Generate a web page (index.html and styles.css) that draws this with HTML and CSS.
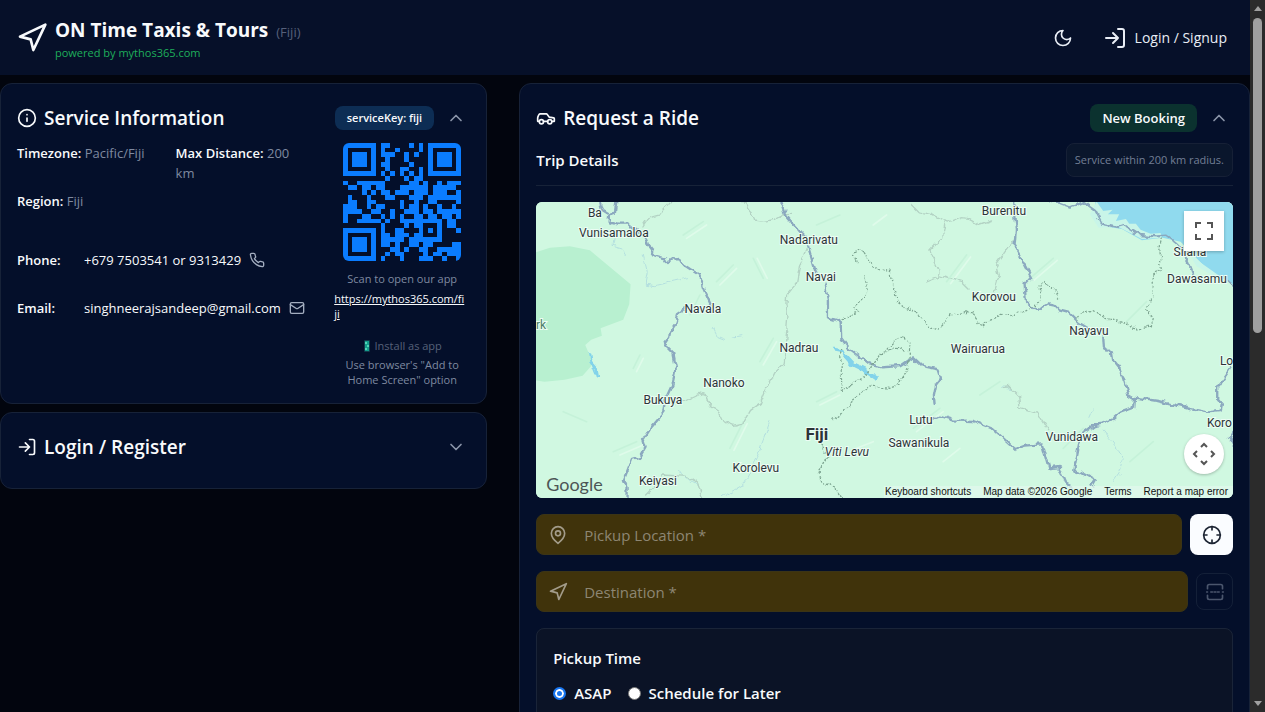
FILE: index.html
```html
<!DOCTYPE html>
<html lang="en">
<head>
<meta charset="utf-8">
<meta name="viewport" content="width=device-width, initial-scale=1">
<title>ON Time Taxis &amp; Tours</title>
<link rel="stylesheet" href="styles.css">
</head>
<body>
<div class="page">
  <header class="header">
    <a class="brand" href="#">
      <svg class="icon icon-32" viewBox="0 0 24 24"><path d="M3 11 22 2l-9 19-2-8z"/></svg>
      <span class="brand-text">
        <span class="brand-line"><span class="brand-name">ON Time Taxis &amp; Tours</span> <span class="brand-region">(Fiji)</span></span>
        <span class="brand-powered">powered by mythos365.com</span>
      </span>
    </a>
    <nav class="header-actions">
      <button class="plain" type="button" aria-label="Toggle theme"><svg class="icon icon-20" viewBox="0 0 24 24"><path d="M12 3a6 6 0 0 0 9 9 9 9 0 1 1-9-9Z"/></svg></button>
      <a class="login-link" href="#"><svg class="icon icon-24" viewBox="0 0 24 24"><path d="M15 3h4a2 2 0 0 1 2 2v14a2 2 0 0 1-2 2h-4M10 17l5-5-5-5M15 12H3"/></svg>Login / Signup</a>
    </nav>
  </header>

  <main class="columns">
    <div class="left">
      <section class="card">
        <div class="card-head">
          <h2 class="card-title"><svg class="icon icon-20" viewBox="0 0 24 24"><circle cx="12" cy="12" r="10"/><path d="M12 16v-4M12 8h.01"/></svg>Service Information</h2>
          <span class="badge badge-key">serviceKey: fiji</span>
          <button class="plain chevron" type="button" aria-label="Collapse"><svg class="icon icon-20" viewBox="0 0 24 24"><path d="m18 15-6-6-6 6"/></svg></button>
        </div>
        <div class="service">
          <div class="details">
            <div class="facts">
              <p><b>Timezone:</b> Pacific/Fiji</p>
              <p><b>Max Distance:</b> 200 km</p>
              <p><b>Region:</b> Fiji</p>
            </div>
            <dl class="contacts">
              <dt>Phone:</dt>
              <dd><a href="#">+679 7503541 or 9313429</a><svg class="icon icon-16 dim" viewBox="0 0 24 24"><path d="M22 16.92v3a2 2 0 0 1-2.18 2 19.79 19.79 0 0 1-8.63-3.07 19.5 19.5 0 0 1-6-6 19.79 19.79 0 0 1-3.07-8.67A2 2 0 0 1 4.11 2h3a2 2 0 0 1 2 1.72 12.84 12.84 0 0 0 .7 2.81 2 2 0 0 1-.45 2.11L8.09 9.91a16 16 0 0 0 6 6l1.27-1.27a2 2 0 0 1 2.11-.45 12.84 12.84 0 0 0 2.81.7A2 2 0 0 1 22 16.92z"/></svg></dd>
              <dt>Email:</dt>
              <dd><a href="#">singhneerajsandeep@gmail.com</a><svg class="icon icon-16 dim" viewBox="0 0 24 24"><rect x="2" y="4" width="20" height="16" rx="2"/><path d="m22 7-8.97 5.7a1.94 1.94 0 0 1-2.06 0L2 7"/></svg></dd>
            </dl>
          </div>
          <div class="share">
            <svg class="qr" id="qr" viewBox="0 0 25 25" role="img" aria-label="QR code"></svg>
            <p class="scan">Scan to open our app</p>
            <a class="share-link" href="#">https://mythos365.com/fiji</a>
            <p class="install"><svg class="phone-emoji" viewBox="0 0 8 12"><rect x="1" width="6" height="12" rx="1" fill="#123c4c"/><path d="M2 1h4v10H2z" fill="#159c8c"/><path d="M2 2h2v2H2zM4 5h2v2H4zM2 8h2v2H2z" fill="#4fd5b5"/></svg>Install as app</p>
            <p class="install-hint">Use browser's "Add to Home Screen" option</p>
          </div>
        </div>
      </section>

      <section class="card card-login">
        <div class="card-head">
          <h2 class="card-title"><svg class="icon icon-20" viewBox="0 0 24 24"><path d="M15 3h4a2 2 0 0 1 2 2v14a2 2 0 0 1-2 2h-4M10 17l5-5-5-5M15 12H3"/></svg>Login / Register</h2>
          <button class="plain chevron" type="button" aria-label="Expand"><svg class="icon icon-20" viewBox="0 0 24 24"><path d="m6 9 6 6 6-6"/></svg></button>
        </div>
      </section>
    </div>

    <section class="card ride">
      <div class="card-head">
        <h2 class="card-title"><svg class="icon icon-20" viewBox="0 0 24 24"><path d="M14 16H9m10 0h3v-3.150a1 1 0 0 0-.84-.99L16 11l-2.700-3.600a1 1 0 0 0-.8-.4H5.240a2 2 0 0 0-1.800 1.100l-.8 1.630A6 6 0 0 0 2 12.420V16h2"/><circle cx="6.500" cy="16.500" r="2.500"/><circle cx="16.500" cy="16.500" r="2.500"/></svg>Request a Ride</h2>
        <span class="badge badge-new">New Booking</span>
        <button class="plain chevron" type="button" aria-label="Collapse"><svg class="icon icon-20" viewBox="0 0 24 24"><path d="m18 15-6-6-6 6"/></svg></button>
      </div>
      <div class="trip-head">
        <h3>Trip Details</h3>
        <span class="radius-note">Service within 200 km radius.</span>
      </div>

      <div class="map">
        <svg class="map-canvas" viewBox="0 0 697 296" preserveAspectRatio="xMidYMid slice">
          <defs>
            <filter id="wiggle" x="0" y="0" width="100%" height="100%">
              <feTurbulence type="fractalNoise" baseFrequency=".12" numOctaves="2" seed="4" result="noise"/>
              <feDisplacementMap in="SourceGraphic" in2="noise" scale="7" xChannelSelector="R" yChannelSelector="G"/>
            </filter>
          </defs>
          <rect width="697" height="296" fill="#d0f8e1"/>
          <g transform="translate(-6 -7) scale(.33333)" fill="none" stroke-linejoin="round" stroke-linecap="round">
            <path fill="#b8f0d0" d="M0 178 60 158l60-4 60 12 50 42 72 60-4 60-18 46-68 26 4 22-32 12-18 16 24 56-32 36-54 12-60 6-40-6z"/>
            <path stroke="#c5f2d9" stroke-width="5" d="M460 120l60-40M560 260l50-50M330 480l-20 40M690 500l40-70M250 770l70-30M600 760l40-80M700 250l-30-60M860 620l60-30M1250 260l60-80M1500 250l70-60M1850 320l-60 60M1150 700l80-60M1800 800l70-60M1350 600l60-40M480 360l30-60M860 90l70-30M100 650l70 30M1600 760l60-60"/>
            <path stroke="#dffbea" stroke-width="5" d="M470 130l60-40M570 270l50-50M340 490l-20 40M700 510l40-70M270 780l70-30M612 766l40-80M712 250l-30-60M870 630l60-30M1262 266l60-80M1512 256l70-60M1160 710l80-60M1240 800l50-40M1030 90l40-30M980 760l50-20"/>
            <path fill="#90daee" d="M1700 0h430v290l-30-30-50-20-60-60-38-40-54-12-62 8-60-34-56-8-20-22 10-12-18-10z"/>
            <path fill="#c8f5e8" d="M1700 20l20 28 28-4-14 14 34 0-10 20 30-6 10 14 20 0 14 18 30 12 30-2 4 14-60 4-70-36-60 2-26-40zM1980 180l110 78-20-4-70-40z"/>
          </g>
          <g filter="url(#wiggle)">
          <rect width="697" height="296" fill="none"/>
          <g transform="translate(-6 -7) scale(.33333)" fill="none" stroke-linejoin="round" stroke-linecap="round">
            <g stroke="#82d3ea" stroke-width="3"><path stroke-width="7" d="M178 478l4 24 18 20 4 22M186 510l10 26M910 462l30 6 12 20"/><path stroke-width="14" d="M950 486l20 22 36 18 34 24"/><path stroke="#b4e0df" d="M250 130l-4 24 28 8 12 20M340 180l12 50-6 38 30 4 60-14 40-10M550 400l14 28 20 8M610 426l26-4M720 680l-40 110-42 80-60 36M440 830l60 40M1720 705l40 50 20 40-12 40-20 30M1690 645l-10 22M1415 575l30 6"/></g>
            <g stroke="#b3d3c4" stroke-width="4"><path d="M425 22l-30 34-36 10-20 30M640 22l30 40 4 16 28 4 28-6 28-16 24-2M830 165l-20 40-10 60-30 36-2 30 6 30-10 120M766 480l-4 26-30 30-20 40-20 50-30 20-24 42-26 6-30-12-16-34-24-16-10-30-20-8-50 24-40 6M1145 30l20 20 40 8 40 20 16 4 34-14 20 2 36 20 34-12M1246 80l-8 46-38 42 28 60-2 16-36 14M1230 243l68 20 20 20M1450 140l-50 70 8 30-14 50M350 900l30-30 20-30 70 4 30 20 15 45M1420 578l20-4 26 26 4 40 50 14 20 30 14 24"/></g>
            <g stroke="#8ba9bf" stroke-width="7"><path d="M210 22l6 22 22 14-2 20 30 8 30 0 50 40 12 34 18 22 30 8 8 14 8-10 30-2 10 18 46 30 12 40 24 52M262 22l-4 30-20 8M470 340l-26 18-8 30-16 22-2 20-14 20 26 26 8 40-10 50-20 44-4 40-42 50-24 38 6 20-16 28-22 6-24 62 8 20 0 52M755 0l0 22 14 40 34 40 24 26 32 110M884 265l10 50 0 52 38 12 2 50 20 28 26 20 36 30 40 10 56-4 38-26 28 26 48 10 8 26-16 20-6 30 2 28M1210 672l20-10 40 14 60 2 60 24 66 60 30-10 50-4 20 72 32-4 20 50 16 8M1450 0l0 22 4 50 4 30-4 50 50 96-20 20 4 50 22 20 20 4 26-14 18 4 14 14 30 8 30 30 24 14M1720 424l2 34 24 14 4 26 24 30 20 68 20 12 70 10 96 24 56 10 36-4 4-20-14-16 0-34 40-58M1815 614l-2 24-40 14-26 22-30 12-24 4-40 30-20 104 26 10 36 20-10 18M1560 16l60 22 40-16 36 26 20 38 46 10 20-6 46 30 50 4 30-2 30 24 20 20 20 40 12 30M2100 258l20 18M2110 710l-10 20 14 26"/></g>
            <g stroke="#7da591" stroke-width="4" stroke-dasharray="3 8"><path d="M978 200l-4-26 16-12 12 12 26 44 52 8 4 28 20 70 60 34 36 40 26 6 40-48 60-4 28 42 60-36 30 4 54-18 36-30-4-48 12-10 44 50M1008 240l0 60-36 36 14 18-44 14-6 28M1894 130l-4 34 4 60-24 20 0 60-20 40 20 26-6 26-40 6-40-18-56-14-40-24-36 6-16 26M932 460l4 130 78-56 26-40 60-60 20-10 20 20-4 70-30 54-30 12-62-8-110 110M876 750l20 30-30 50 10 30 40 20 24 34M1050 485l40-26 36 6"/></g>
          </g>
          </g>
          <rect x="348" y="284" width="349" height="12" fill="#e2f8ec" opacity=".75"/>
          <g class="places">
            <text x="59" y="15">Ba</text><text x="78" y="35">Vunisamaloa</text><text x="273" y="42">Nadarivatu</text><text x="285" y="79">Navai</text><text x="468" y="13">Burenitu</text><text x="654" y="54">Silana</text><text x="661" y="81">Dawasamu</text><text x="458" y="99">Korovou</text><text x="167" y="111">Navala</text><text x="553" y="133">Nayavu</text><text x="263" y="150">Nadrau</text><text x="442" y="151">Wairuarua</text><text x="188" y="185">Nanoko</text><text x="127" y="202">Bukuya</text><text x="385" y="222">Lutu</text><text x="383" y="245">Sawanikula</text><text x="536" y="239">Vunidawa</text><text x="220" y="270">Korolevu</text><text x="122" y="283">Keiyasi</text>
            <text class="edge" x="684" y="163">Lo</text><text class="edge" x="671" y="225">Koro</text><text class="edge park" x="0" y="127">rk</text>
            <text class="country" x="281" y="238">Fiji</text><text class="island" x="311" y="254">Viti Levu</text>
          </g>
        </svg>
        <span class="map-logo">Google</span>
        <button class="map-control map-full" type="button" aria-label="Toggle fullscreen view"><svg viewBox="0 0 18 18"><path d="M0 0v6h2V2h4V0zM16 0h-4v2h4v4h2V0zM16 16h-4v2h6v-6h-2zM2 12H0v6h6v-2H2z"/></svg></button>
        <button class="map-control map-camera" type="button" aria-label="Map camera controls"><svg class="camera" viewBox="0 0 24 24"><path d="m9 5 3-3 3 3M9 19l3 3 3-3M5 9l-3 3 3 3M19 9l3 3-3 3"/></svg></button>
        <div class="map-legal"><a href="#">Keyboard shortcuts</a><span>Map data ©2026 Google</span><a href="#">Terms</a><a href="#">Report a map error</a></div>
      </div>

      <div class="field-row">
        <label class="field"><svg class="icon icon-20" viewBox="0 0 24 24"><path d="M20 10c0 6-8 12-8 12s-8-6-8-12a8 8 0 0 1 16 0Z"/><circle cx="12" cy="10" r="3"/></svg><input type="text" placeholder="Pickup Location *" aria-label="Pickup Location"></label>
        <button class="locate" type="button" aria-label="Use my location"><svg class="icon icon-20" viewBox="0 0 24 24"><circle cx="12" cy="12" r="10"/><path d="M22 12h-4M6 12H2M12 6V2M12 22v-4"/></svg></button>
      </div>
      <div class="field-row">
        <label class="field"><svg class="icon icon-20" viewBox="0 0 24 24"><path d="M3 11 22 2l-9 19-2-8z"/></svg><input type="text" placeholder="Destination *" aria-label="Destination"></label>
        <button class="stops" type="button" aria-label="Add stop"><svg class="icon icon-20" viewBox="0 0 24 24"><path d="M3 8V5a2 2 0 0 1 2-2h14a2 2 0 0 1 2 2v3M21 16v3a2 2 0 0 1-2 2H5a2 2 0 0 1-2-2v-3M2 12h1M7 12h2M11 12h2M15 12h2M21 12h1"/></svg></button>
      </div>

      <fieldset class="pickup">
        <legend>Pickup Time</legend>
        <div class="radios">
          <label><input type="radio" name="when" checked>ASAP</label>
          <label><input type="radio" name="when">Schedule for Later</label>
        </div>
      </fieldset>
    </section>
  </main>
</div>
<div class="scrollbar" aria-hidden="true"><span class="arrow up"></span><span class="thumb"></span><span class="arrow down"></span></div>
<script src="qr.js"></script>
</body>
</html>
```

FILE: styles.css
```css
* { box-sizing: border-box; }
body {
  margin: 0;
  height: 100vh;
  display: flex;
  overflow: hidden;
  background: #02050e;
  color: #f8fafc;
  font: 14px/20px "Open Sans", "Noto Sans", sans-serif;
}
h2, h3, p, dl, dd { margin: 0; }
a { color: inherit; text-decoration: none; }
button, input { font: inherit; color: inherit; }
.icon { fill: none; stroke: currentColor; stroke-width: 2; stroke-linecap: round; stroke-linejoin: round; flex: none; }
.icon-16 { width: 16px; height: 16px; }
.icon-20 { width: 20px; height: 20px; }
.icon-24 { width: 24px; height: 24px; }
.icon-32 { width: 32px; height: 32px; }
.plain { display: flex; padding: 0; border: 0; background: none; }
.page { flex: 1; min-width: 0; overflow: hidden; }

.header {
  display: flex;
  align-items: center;
  justify-content: space-between;
  padding: 12px 23px 12px 16px;
  min-height: 75px;
  background: #061029;
}
.brand { display: flex; align-items: center; gap: 7px; }
.brand-text { display: flex; flex-direction: column; padding-top: 4px; }
.brand-line { display: flex; align-items: baseline; gap: 8px; line-height: 24px; }
.brand-name { font-size: 19px; font-weight: 700; }
.brand-region { font-size: 13px; color: #56607a; }
.brand-powered { font-size: 11px; line-height: 18px; color: #1fae5b; }
.header-actions { display: flex; align-items: center; gap: 30px; color: #e8edf5; }
.login-link { display: flex; align-items: center; gap: 8px; font-weight: 500; }

.columns { display: grid; grid-template-columns: 2fr 3fr; gap: 32px; padding-top: 8px; }
.left { display: flex; flex-direction: column; gap: 8px; min-width: 0; }
.card {
  min-width: 0;
  padding: 20px 16px 16px;
  border: 1px solid #172238;
  border-radius: 12px;
  background: #040f2a;
}
.card-head { display: flex; align-items: center; gap: 12px; height: 28px; }
.card-title { display: flex; align-items: center; gap: 7px; margin-right: auto; font-size: 19px; font-weight: 600; }
.badge { border-radius: 8px; font-weight: 600; white-space: nowrap; }
.badge-key { padding: 2px 12px; font-size: 11px; background: #0d2d54; }
.badge-new { padding: 4px 12px; font-size: 13px; background: #0b322f; }
.chevron { margin-right: 4px; color: #8b95a9; }
.card-login { min-height: 77px; }

.service { display: grid; grid-template-columns: 1fr 136px; gap: 16px; padding-top: 11px; }
.details { font-size: 13px; }
.facts { display: grid; grid-template-columns: 1fr 1fr; gap: 8px 16px; color: #7f8aa0; }
.facts b { font-weight: 600; color: #f8fafc; }
.facts p { padding-right: 12px; }
.contacts { display: grid; grid-template-columns: 67px 1fr; row-gap: 28px; padding-top: 39px; }
.contacts dt { font-weight: 600; }
.contacts dd { display: flex; align-items: center; gap: 8px; white-space: nowrap; }
.dim { color: #a3adbf; }
.share { text-align: center; font-size: 11px; line-height: 15px; color: #7f8aa0; }
.qr { display: block; width: 118px; height: 118px; margin: 0 auto 10px; border-radius: 6px; fill: #0a7cff; }
.share-link { display: block; margin-top: 5px; padding-right: 5px; text-align: left; text-decoration: underline; color: #f8fafc; word-break: break-all; }
.install { display: flex; align-items: center; justify-content: center; gap: 4px; margin-top: 17px; color: #566179; }
.phone-emoji { width: 8px; height: 12px; }
.install-hint { margin-top: 4px; }

.trip-head { display: flex; align-items: center; justify-content: space-between; padding: 11px 0 8px; border-bottom: 1px solid #172238; margin-bottom: 16px; }
.trip-head h3, .pickup legend { font-size: 15px; font-weight: 600; }
.radius-note { padding: 6px 8px; border: 1px solid #162036; border-radius: 8px; background: #0a162c; color: #737f95; font-size: 11px; }

.map { position: relative; height: 296px; border-radius: 6px; overflow: hidden; background: #d0f8e1; }
.map-canvas { display: block; width: 100%; height: 100%; }
.places { font: 12px Roboto, sans-serif; text-anchor: middle; fill: #2c3438; paint-order: stroke; stroke: #ecfdf4; stroke-width: 2px; }
.places .edge { text-anchor: start; }
.places .park { fill: #4a7d67; }
.places .country { font-size: 17px; font-weight: 700; }
.places .island { font-style: italic; }
.map-logo { position: absolute; left: 10px; bottom: 3px; font: 18px/22px "Lato", sans-serif; color: #4d5656; }
.map-control { position: absolute; right: 9px; display: flex; align-items: center; justify-content: center; width: 40px; height: 40px; padding: 0; border: 0; background: #fff; fill: #555; box-shadow: 0 1px 3px rgb(0 0 0 / 25%); }
.map-full { top: 9px; }
.map-full svg { width: 18px; height: 18px; }
.map-camera { bottom: 24px; border-radius: 50%; }
.camera { width: 24px; height: 24px; fill: none; stroke: #555; stroke-width: 2; }
.map-legal { position: absolute; right: 5px; bottom: 0; display: flex; gap: 12px; font: 10px/12px "Liberation Sans", sans-serif; color: #111; white-space: nowrap; }

.field-row { display: flex; align-items: center; gap: 8px; margin-top: 16px; }
.field { flex: 1; display: flex; align-items: center; gap: 16px; height: 41px; padding: 0 11px; border: 1px solid #3b3416; border-radius: 8px; background: #40330b; color: #a39c8a; }
.field input { flex: 1; min-width: 0; padding: 0; border: 0; outline: 0; background: none; font-size: 15px; }
.field input::placeholder { color: #8d8673; opacity: 1; }
.locate, .stops { display: flex; align-items: center; justify-content: center; padding: 0; border-radius: 8px; }
.locate { width: 43px; height: 41px; border: 0; background: #fafcff; color: #1c2433; }
.stops { width: 37px; height: 37px; border: 1px solid #142038; background: none; color: #4b566d; }

.pickup { margin: 16px 0 0; padding: 19px 16px 16px; border: 1px solid #1a2438; border-radius: 8px; background: #0b1326; }
.pickup legend { float: left; width: 100%; padding: 0; }
.radios { clear: both; display: flex; gap: 16px; padding-top: 15px; font-size: 15px; font-weight: 600; }
.radios label { display: flex; align-items: center; gap: 8px; }
.radios input { appearance: none; width: 13px; height: 13px; margin: 0; border: 1px solid #767676; border-radius: 50%; background: #fff; }
.radios input:checked { border: 2px solid #1876f0; background: #1876f0; box-shadow: inset 0 0 0 2px #fff; }

.scrollbar { display: flex; flex-direction: column; align-items: center; width: 15px; padding: 6px 0; background: #2b2b2b; }
.arrow { border: 4px solid transparent; }
.up { border-top: 0; border-bottom: 5px solid #a0a0a0; }
.down { margin-top: auto; border-bottom: 0; border-top: 5px solid #a0a0a0; }
.thumb { width: 9px; height: 45%; margin-top: 7px; border-radius: 5px; background: #9f9f9f; }
```

FILE: qr.js
```js
// QR code, version 2, error correction M, mask 6.
(function () {
  const text = "https://mythos365.com/fiji";
  const size = 25, dataLen = 28, ecLen = 16;
  const bits = [];
  const push = (value, count) => { for (let i = count - 1; i >= 0; i--) bits.push((value >> i) & 1); };
  push(4, 4);
  push(text.length, 8);
  for (const ch of text) push(ch.charCodeAt(0), 8);
  push(0, Math.min(4, dataLen * 8 - bits.length));
  while (bits.length % 8) bits.push(0);
  for (let pad = 0xec; bits.length < dataLen * 8; pad ^= 0xfd) push(pad, 8);

  const mul = (a, b) => {
    let r = 0;
    for (; b; b >>= 1) { if (b & 1) r ^= a; a <<= 1; if (a & 256) a ^= 0x11d; }
    return r;
  };
  const gen = new Array(ecLen).fill(0);
  gen[ecLen - 1] = 1;
  for (let i = 0, root = 1; i < ecLen; i++, root = mul(root, 2)) {
    for (let j = 0; j < ecLen; j++) gen[j] = mul(gen[j], root) ^ (j + 1 < ecLen ? gen[j + 1] : 0);
  }
  const rem = new Array(ecLen).fill(0);
  for (let i = 0; i < dataLen; i++) {
    const factor = parseInt(bits.slice(i * 8, i * 8 + 8).join(""), 2) ^ rem.shift();
    rem.push(0);
    gen.forEach((g, j) => { rem[j] ^= mul(g, factor); });
  }
  rem.forEach(v => push(v, 8));

  const grid = Array.from({ length: size }, () => new Array(size).fill(null));
  const finder = (cy, cx) => {
    for (let y = -4; y <= 4; y++) for (let x = -4; x <= 4; x++) {
      const r = cy + y, c = cx + x, d = Math.max(Math.abs(x), Math.abs(y));
      if (r >= 0 && c >= 0 && r < size && c < size) grid[r][c] = d !== 2 && d !== 4;
    }
  };
  for (let i = 0; i < size; i++) grid[6][i] = grid[i][6] = i % 2 === 0;
  finder(3, 3); finder(3, size - 4); finder(size - 4, 3);
  for (let y = -2; y <= 2; y++) for (let x = -2; x <= 2; x++) grid[18 + y][18 + x] = Math.max(Math.abs(x), Math.abs(y)) !== 1;

  const format = "100111110010111";
  const f = i => format[14 - i] === "1";
  for (let i = 0; i < 6; i++) grid[i][8] = f(i);
  grid[7][8] = f(6); grid[8][8] = f(7); grid[8][7] = f(8);
  for (let i = 9; i < 15; i++) grid[8][14 - i] = f(i);
  for (let i = 0; i < 8; i++) grid[8][size - 1 - i] = f(i);
  for (let i = 8; i < 15; i++) grid[size - 15 + i][8] = f(i);
  grid[size - 8][8] = true;

  let n = 0;
  for (let right = size - 1; right > 0; right -= 2) {
    if (right === 6) right = 5;
    const up = ((right + 1) & 2) === 0;
    for (let v = 0; v < size; v++) for (let j = 0; j < 2; j++) {
      const c = right - j, r = up ? size - 1 - v : v;
      if (grid[r][c] === null) {
        const mask = (r * c % 2 + r * c % 3) % 2 === 0;
        grid[r][c] = Boolean(bits[n++]) !== mask;
      }
    }
  }

  let d = "";
  grid.forEach((row, y) => {
    for (let x = 0; x < size; x++) {
      if (!row[x]) continue;
      let end = x;
      while (row[end + 1]) end++;
      d += `M${x} ${y}h${end - x + 1}v1H${x}z`;
      x = end;
    }
  });
  const path = document.createElementNS("http://www.w3.org/2000/svg", "path");
  path.setAttribute("d", d);
  path.setAttribute("shape-rendering", "crispEdges");
  document.getElementById("qr").append(path);
})();
```
